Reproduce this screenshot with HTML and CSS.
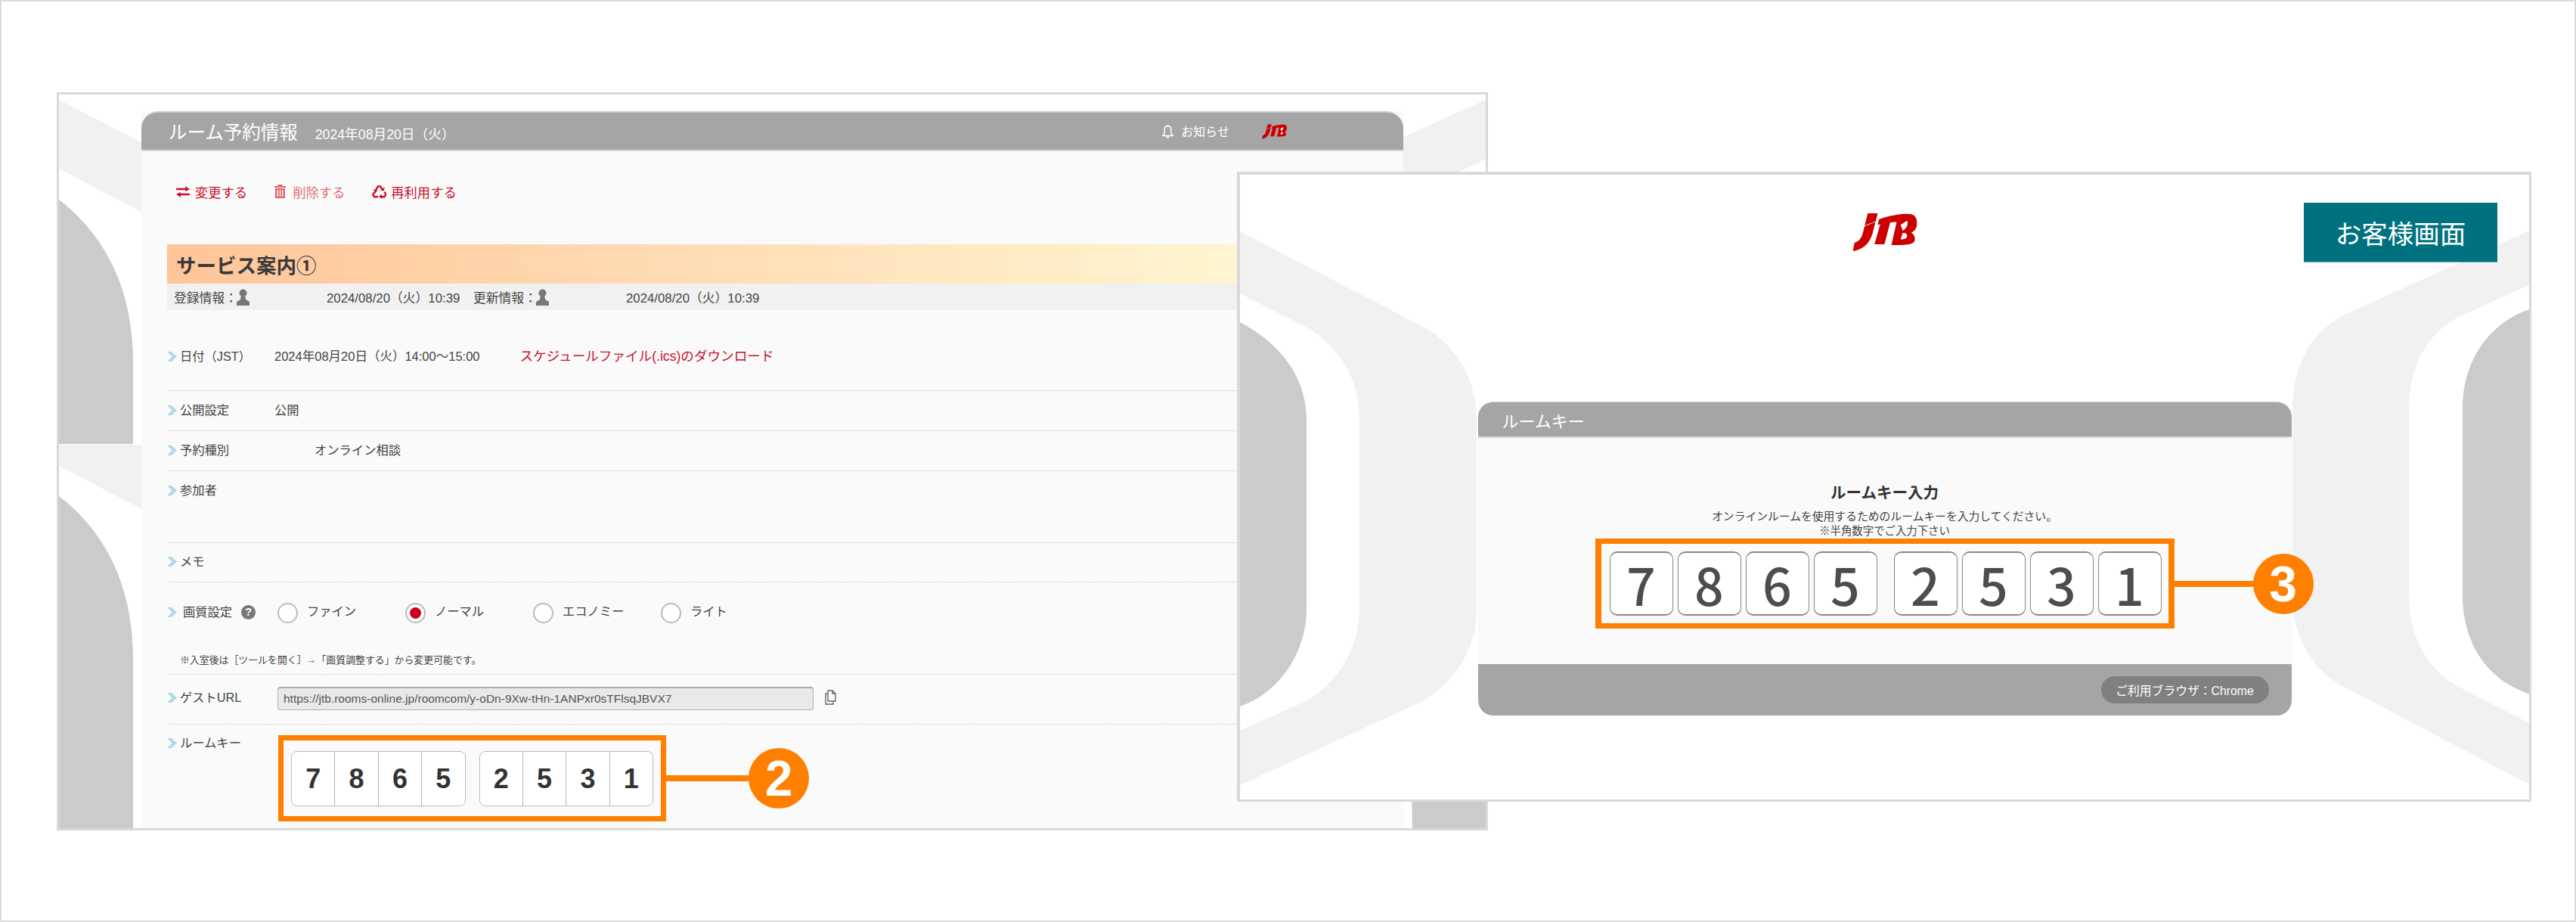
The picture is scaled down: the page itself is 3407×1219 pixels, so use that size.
FILE: index.html
```html
<!DOCTYPE html>
<html lang="ja">
<head>
<meta charset="utf-8">
<title>ルームキー</title>
<link rel="stylesheet" href="styles.css">
</head>
<body>
<main class="canvas">

  <section class="window window-admin">
    <svg class="window-bg" viewBox="78 125 1887 970" preserveAspectRatio="none" aria-hidden="true">
      <path class="bg-light" d="M78 132L187 188V280L78 223Z"/>
      <path class="bg-dark" d="M78 264C125 300 176 365 176 480V587H78Z"/>
      <path class="bg-light" d="M78 588H187V673L78 616Z"/>
      <path class="bg-dark" d="M78 656C125 692 176 757 176 872V1095H78Z"/>
      <path class="bg-light" d="M1856 181L1965 132V210L1930 227H1856Z"/>
      <path class="bg-dark" d="M1867 1050H1965V1095H1868Z"/>
    </svg>
    <div class="panel panel-admin">
      <header class="panel-head">
        <div class="head-title">
          <h1 class="title">ルーム予約情報</h1>
          <span class="title-date">2024年08月20日（火）</span>
        </div>
        <div class="head-tools">
          <svg class="bell" viewBox="0 0 15 18" aria-hidden="true"><path d="M7.500 1.500C4.500 1.500 3.200 3.800 3.200 6.500V10.500C3.200 12 2.200 13 1 13.800V14.500H14V13.800C12.800 13 11.800 12 11.800 10.500V6.500C11.800 3.800 10.500 1.500 7.500 1.500Z" fill="none" stroke="#fff" stroke-width="1.500"/><circle cx="7.500" cy="1.300" r="1.200" fill="#fff"/><path d="M5.500 15.500H9.500C9.500 17 8.500 18 7.500 18S5.500 17 5.500 15.500Z" fill="#fff"/></svg>
          <span class="notice">お知らせ</span>
          <svg class="jtb jtb-small" viewBox="0 0 258 152" aria-hidden="true"><use href="#jtb-logo"/></svg>
        </div>
      </header>
      <div class="panel-body">
        <nav class="actions">
          <a class="action">
            <svg class="action-icon" viewBox="0 0 19 16" aria-hidden="true"><path d="M0 3H13V0L19 4.500L13 7.500V5.500H0Z M19 10.500V13H6V16L0 11.500L6 8.500V10.500Z" fill="#c8102e"/></svg>変更する</a>
          <a class="action action-faded">
            <svg class="action-icon action-trash" viewBox="0 0 15 18" aria-hidden="true"><path d="M5 0H10L11 2H15V4H0V2H4ZM1 5H14V18H1ZM3.500 7V16H5V7ZM6.800 7V16H8.200V7ZM10 7V16H11.500V7Z" fill="#e0666e" fill-rule="evenodd"/></svg>削除する</a>
          <a class="action">
            <svg class="action-icon action-recycle" viewBox="0 0 24 24" aria-hidden="true"><g fill="none" stroke="#c8102e" stroke-width="3"><path d="M6 10L10 3H14L16.500 7.500"/><path d="M21 12L23 17L20.500 20.500H16"/><path d="M3.500 13L1.500 17L4 20.500H10"/></g><path d="M13.500 9.500L20 10.500L21 4Z M16.500 16V24L11 20Z M2.500 8L9 9.800L5 15.500Z" fill="#c8102e"/></svg>再利用する</a>
        </nav>
        <div class="banner"><h2 class="banner-title">サービス案内①</h2></div>
        <div class="meta">
          <span class="meta-label">登録情報：<svg class="person" viewBox="0 0 17 22" aria-hidden="true"><use href="#person"/></svg></span>
          <span>2024/08/20（火）10:39</span>
          <span class="meta-label">更新情報：<svg class="person" viewBox="0 0 17 22" aria-hidden="true"><use href="#person"/></svg></span>
          <span>2024/08/20（火）10:39</span>
        </div>

        <div class="row row-date">
          <div class="row-label"><svg class="chev" viewBox="0 0 13 13" aria-hidden="true"><use href="#chev"/></svg>日付（JST）</div>
          <div class="row-value">2024年08月20日（火）14:00～15:00<a class="ics">スケジュールファイル(.ics)のダウンロード</a></div>
        </div>
        <div class="row row-short">
          <div class="row-label"><svg class="chev" viewBox="0 0 13 13" aria-hidden="true"><use href="#chev"/></svg>公開設定</div>
          <div class="row-value">公開</div>
        </div>
        <div class="row row-short">
          <div class="row-label"><svg class="chev" viewBox="0 0 13 13" aria-hidden="true"><use href="#chev"/></svg>予約種別</div>
          <div class="row-value row-value-kind">オンライン相談</div>
        </div>
        <div class="row row-people">
          <div class="row-label"><svg class="chev" viewBox="0 0 13 13" aria-hidden="true"><use href="#chev"/></svg>参加者</div>
          <div class="row-value"></div>
        </div>
        <div class="row row-memo">
          <div class="row-label"><svg class="chev" viewBox="0 0 13 13" aria-hidden="true"><use href="#chev"/></svg>メモ</div>
          <div class="row-value"></div>
        </div>
        <div class="row row-quality">
          <div class="row-label row-label-quality"><svg class="chev" viewBox="0 0 13 13" aria-hidden="true"><use href="#chev"/></svg>画質設定<span class="help">?</span></div>
          <div class="radios">
            <span class="radio-item"><i class="radio"></i>ファイン</span>
            <span class="radio-item"><i class="radio radio-on"></i>ノーマル</span>
            <span class="radio-item"><i class="radio"></i>エコノミー</span>
            <span class="radio-item"><i class="radio"></i>ライト</span>
          </div>
          <p class="note">※入室後は［ツールを開く］→「画質調整する」から変更可能です。</p>
        </div>
        <div class="row row-url">
          <div class="row-label"><svg class="chev" viewBox="0 0 13 13" aria-hidden="true"><use href="#chev"/></svg>ゲストURL</div>
          <div class="url-line">
            <div class="url-field">https://jtb.rooms-online.jp/roomcom/y-oDn-9Xw-tHn-1ANPxr0sTFlsqJBVX7</div>
            <svg class="copy" viewBox="0 0 18 20" aria-hidden="true"><path d="M5 1H11L15 5V15H5Z M11 1V5H15" fill="none" stroke="#666" stroke-width="1.400"/><path d="M5 5H2V19H12V15" fill="none" stroke="#666" stroke-width="1.400"/></svg>
          </div>
        </div>
        <div class="row row-key">
          <div class="row-label"><svg class="chev" viewBox="0 0 13 13" aria-hidden="true"><use href="#chev"/></svg>ルームキー</div>
          <div class="callout-box key-box-admin">
            <div class="key-group"><span class="key-cell">7</span><span class="key-cell">8</span><span class="key-cell">6</span><span class="key-cell">5</span></div>
            <div class="key-group"><span class="key-cell">2</span><span class="key-cell">5</span><span class="key-cell">3</span><span class="key-cell">1</span></div>
            <div class="callout callout-admin"><span class="callout-line"></span><span class="callout-num">2</span></div>
          </div>
        </div>
      </div>
    </div>
  </section>

  <section class="window window-guest">
    <svg class="window-bg" viewBox="1640 231 1705 826" preserveAspectRatio="none" aria-hidden="true">
      <path class="bg-light" d="M1640 306L1882 432C1925 455 1953 500 1953 556V806C1953 860 1920 910 1873 931L1640 1038V966L1718 931C1765 910 1798 860 1798 806V556C1798 500 1770 456 1728 433L1640 388Z"/>
      <path class="bg-dark" d="M1640 426C1695 455 1728 500 1728 556V806C1728 860 1695 910 1650 930L1640 934Z"/>
      <path class="bg-light" d="M3345 305L3108 413C3062 432 3032 480 3032 538V788C3032 845 3062 892 3108 912L3345 1037V956L3260 912C3215 892 3186 845 3186 788V538C3186 480 3215 432 3265 413L3345 377Z"/>
      <path class="bg-dark" d="M3345 409C3290 428 3257 480 3257 538V788C3257 845 3285 890 3327 910L3345 918Z"/>
    </svg>
    <header class="guest-top">
      <span></span>
      <svg class="jtb jtb-large" viewBox="0 0 258 152" role="img" aria-label="JTB"><use href="#jtb-logo"/></svg>
      <div class="guest-tag">お客様画面</div>
    </header>
    <div class="panel panel-guest">
      <header class="panel-head panel-head-guest">ルームキー</header>
      <div class="guest-body">
        <h2 class="guest-title">ルームキー入力</h2>
        <p class="guest-desc">オンラインルームを使用するためのルームキーを入力してください。</p>
        <p class="guest-desc guest-desc-2">※半角数字でご入力下さい</p>
        <div class="callout-box key-box-guest">
          <div class="key-tiles"><span class="key-tile">7</span><span class="key-tile">8</span><span class="key-tile">6</span><span class="key-tile">5</span></div>
          <div class="key-tiles"><span class="key-tile">2</span><span class="key-tile">5</span><span class="key-tile">3</span><span class="key-tile">1</span></div>
          <div class="callout callout-guest"><span class="callout-line"></span><span class="callout-num">3</span></div>
        </div>
      </div>
      <footer class="guest-foot"><span class="browser-chip">ご利用ブラウザ：Chrome</span></footer>
    </div>
  </section>

  <svg class="defs" aria-hidden="true">
    <defs>
      <symbol id="chev" viewBox="0 0 13 13"><path d="M0 0H6L13 6.500L6 13H0L6.500 6.500Z" fill="#b4d8e5"/></symbol>
      <symbol id="person" viewBox="0 0 17 22"><circle cx="8.500" cy="5.500" r="5" fill="#777"/><path d="M5.500 10H11.500L12 14L17 17V22H0V17L5 14Z" fill="#777"/></symbol>
      <symbol id="jtb-logo" viewBox="0 0 258 152">
        <g fill="#cc0000">
          <path d="M60 0H100L84 62C74 108 55 142 0 152L7 118C25 112 36 100 42 72Z"/>
          <path d="M105 24C125 16 145 11 165 8L168 35L150 37L127 125H87L110 44L100 46Z"/>
          <path d="M165 8C190 3 210 2 228 3C250 3 260 22 258 45C256 62 248 72 235 78C248 84 252 100 248 112C240 128 210 128 155 128L176 36L165 34Z"/>
        </g>
        <path d="M46 52L100 30" stroke="#fff" stroke-width="2.500" fill="none"/>
        <path d="M192 46L218 30C224 42 218 60 201 70ZM200 80C214 77 221 86 217 95C213 104 202 105 192 105Z" fill="#fff"/>
      </symbol>
    </defs>
  </svg>
</main>
</body>
</html>
```

FILE: styles.css
```css
* { box-sizing: border-box; }

html, body { margin: 0; padding: 0; }

body {
  width: 3407px;
  height: 1219px;
  overflow: hidden;
  background: #fff;
  color: #444;
  font-family: "Liberation Sans", "Noto Sans CJK JP", sans-serif;
}

h1, h2, p { margin: 0; font-weight: normal; }

.canvas {
  position: relative;
  width: 3407px;
  height: 1219px;
  border: 2px solid #dcdcdc;
}

.defs { position: absolute; width: 0; height: 0; }

/* free-floating screenshot windows */
.window {
  position: absolute;
  overflow: hidden;
  background: #fff;
  border-style: solid;
  border-color: #d9d9d9;
}

.window-admin {
  left: 73px;
  top: 120px;
  width: 1893px;
  height: 976px;
  border-width: 3px;
}

.window-guest {
  left: 1634px;
  top: 225px;
  width: 1712px;
  height: 833px;
  border-width: 4px 3px 3px 4px;
  display: flex;
  flex-direction: column;
  align-items: center;
}

.window-bg {
  position: absolute;
  inset: 0;
  width: 100%;
  height: 100%;
}

.bg-light { fill: #f1f1f1; }
.bg-dark { fill: #cbcbcb; }

/* panels */
.panel { position: relative; }

.panel-admin {
  display: flex;
  flex-direction: column;
  width: 1669px;
  height: 948px;
  margin: 22px 0 0 109px;
  background: #fafafa;
}

.panel-head {
  display: flex;
  align-items: center;
  justify-content: space-between;
  height: 53px;
  padding: 0 154px 0 36px;
  background: #a5a5a5;
  border-top: 2px solid #ccc;
  border-bottom: 2px solid #d8d8d8;
  border-radius: 22px 22px 0 0;
  color: #fff;
}

.head-title { display: flex; align-items: baseline; gap: 23px; }
.title { font-size: 24.500px; }
.title-date { font-size: 17.700px; }

.head-tools { display: flex; align-items: center; }
.bell { width: 15px; height: 18px; margin-right: 10px; }
.notice { font-size: 16px; margin-right: 43px; margin-bottom: 2px; }

.jtb { display: block; }
.jtb-small { width: 33px; height: 20px; }
.jtb-large { width: 86px; height: 50px; margin-top: 14px; justify-self: center; }

.panel-body { flex: 1; padding: 37px 34px 0; }

.actions {
  display: flex;
  align-items: center;
  height: 32px;
  padding-left: 12px;
  font-size: 17.300px;
  color: #c8102e;
  margin-bottom: 54px;
}

.action { display: flex; align-items: center; margin-right: 36px; }
.action-icon { width: 18px; height: 15px; margin-right: 7px; }
.action-trash { width: 15px; height: 18px; margin-right: 9px; }
.action-recycle { width: 19px; height: 19px; margin-right: 6px; }
.action-faded { color: #e0707a; }

.banner {
  display: flex;
  align-items: center;
  height: 52px;
  padding-left: 12px;
  background: linear-gradient(90deg, #ffc599 0, #fff5d0 88%);
}

.banner-title { font-size: 26.500px; font-weight: bold; color: #3a3a3a; }

.meta {
  display: grid;
  grid-template-columns: 202px 194px 202px auto;
  align-items: center;
  height: 35px;
  padding-left: 9px;
  background: #f1f1f1;
  font-size: 16.800px;
  color: #444;
}

.meta-label { display: flex; align-items: center; }
.person { width: 17px; height: 22px; margin-left: -1px; }

/* detail rows */
.row {
  display: grid;
  grid-template-columns: 142px 1fr;
  align-items: start;
  line-height: 24px;
  font-size: 16.300px;
  border-bottom: 1px dotted #c8c8c8;
}

.row-date { height: 107px; padding-top: 49px; margin-top: 0; }
.row-short { height: 53px; padding-top: 13px; }
.row-people { height: 95px; padding-top: 13px; }
.row-memo { height: 52px; padding-top: 12px; }
.row-quality { height: 122px; padding-top: 27px; row-gap: 31px; }
.row-url { height: 66px; padding-top: 16px; }
.row-key { border-bottom: 0; padding-top: 12px; }

.row-label { display: flex; align-items: center; gap: 4px; height: 24px; white-space: nowrap; }
.row-label-quality { gap: 8px; }
.row-url .row-label { margin-top: 2px; }

.chev { width: 13px; height: 13px; flex: none; }

.row-date .row-value { font-size: 16.500px; white-space: nowrap; }
.row-value-kind { padding-left: 53px; }

.ics { margin-left: 53px; color: #c8102e; font-size: 17.600px; }

.help {
  display: inline-flex;
  align-items: center;
  justify-content: center;
  width: 19px;
  height: 19px;
  margin-left: 4px;
  border-radius: 50%;
  background: #777;
  color: #fff;
  font-size: 15px;
  font-weight: bold;
}

.radios { display: flex; padding-left: 4px; }

.radio-item {
  display: flex;
  align-items: flex-start;
  width: 169px;
  line-height: 22px;
  color: #444;
}

.radio {
  position: relative;
  width: 27px;
  height: 27px;
  margin-right: 12px;
  border: 2px solid #bbb;
  border-radius: 50%;
  background: #fff;
}

.radio-on::after {
  content: "";
  position: absolute;
  inset: 4px;
  border-radius: 50%;
  background: #c8001e;
}

.note {
  grid-column: 1 / 3;
  padding-left: 17px;
  font-size: 12.900px;
  line-height: 18px;
}

.url-line { display: flex; align-items: flex-start; padding-left: 4px; }

.url-field {
  width: 709px;
  height: 31px;
  padding-left: 7px;
  background: #e9e9e9;
  border: 1px solid #b0b0b0;
  border-top: 2px solid #aaa;
  border-radius: 4px;
  font-size: 15.500px;
  line-height: 28px;
  color: #555;
  white-space: nowrap;
}

.copy { width: 18px; height: 20px; margin: 4px 0 0 14px; }

/* key boxes with numbered callouts */
.callout-box {
  position: relative;
  display: flex;
  border: 7px solid #ff7f00;
}

.key-box-admin {
  width: 513px;
  height: 114px;
  margin: 2px 0 0 5px;
  padding: 14px 10px;
  gap: 18px;
}

.key-group {
  display: flex;
  width: 231px;
  height: 73px;
  background: #fff;
  border: 1px solid #bbb;
  border-radius: 8px;
}

.key-cell {
  flex: 1;
  display: flex;
  align-items: center;
  justify-content: center;
  border-left: 1px solid #b5b5b5;
  font-size: 36px;
  font-weight: bold;
  color: #333;
}

.key-cell:first-child { border-left: 0; }

.callout { position: absolute; left: 100%; top: 50%; display: flex; align-items: center; transform: translateY(-50%); }
.callout-admin { margin-left: 7px; }
.callout-guest { margin-left: 8px; }

.callout-line { display: block; height: 8px; background: #ff7f00; }
.callout-admin .callout-line { width: 110px; }
.callout-guest .callout-line { width: 105px; }

.callout-num {
  display: flex;
  align-items: center;
  justify-content: center;
  width: 80px;
  height: 80px;
  margin-left: -1px;
  border-radius: 50%;
  background: #ff7f00;
  color: #fff;
  font-family: "Liberation Sans", sans-serif;
  font-size: 66px;
  font-weight: bold;
}

/* guest window */
.guest-top {
  position: relative;
  display: grid;
  grid-template-columns: 1fr auto 1fr;
  align-items: start;
  width: 100%;
  padding: 37px 42px 0;
}

.guest-tag {
  justify-self: end;
  width: 256px;
  height: 79px;
  display: flex;
  align-items: center;
  justify-content: center;
  background: #00727f;
  border-bottom: 1px solid #6fb0b8;
  color: #fff;
  font-size: 34.500px;
}

.panel-guest {
  width: 1076px;
  height: 415px;
  margin-top: 184px;
  display: flex;
  flex-direction: column;
}

.panel-head-guest {
  height: 48px;
  padding: 0 32px;
  font-size: 22px;
  border-radius: 20px 20px 0 0;
  border-top: 1px solid #ccc;
  justify-content: flex-start;
}

.guest-body {
  flex: 1;
  display: flex;
  flex-direction: column;
  align-items: center;
  padding-top: 59px;
  background: #fafafa;
}

.guest-title { font-size: 20.500px; font-weight: bold; line-height: 28px; color: #333; margin-bottom: 8px; }
.guest-desc { font-size: 14.800px; line-height: 19px; color: #444; }
.guest-desc-2 { font-size: 14.400px; }

.key-box-guest {
  width: 766px;
  height: 119px;
  margin-top: 0;
  padding: 10px 11px;
  gap: 22px;
  border-width: 7px 8px;
}

.key-tiles { display: flex; gap: 6px; }

.key-tile {
  display: flex;
  align-items: center;
  justify-content: center;
  width: 84px;
  height: 85px;
  background: #fff;
  border: 1px solid #888;
  border-top-width: 2px;
  border-bottom-width: 2px;
  border-radius: 10px;
  font-family: "Noto Sans CJK JP", sans-serif;
  font-size: 68px;
  font-weight: 500;
  color: #4d4d4d;
}

.guest-foot {
  display: flex;
  justify-content: flex-end;
  height: 68px;
  padding: 16px 30px 0 0;
  background: #a5a5a5;
  border-radius: 0 0 20px 20px;
}

.browser-chip {
  display: flex;
  align-items: center;
  justify-content: center;
  width: 222px;
  height: 36px;
  border-radius: 18px;
  background: #808080;
  color: #fff;
  font-size: 15.800px;
}
```
